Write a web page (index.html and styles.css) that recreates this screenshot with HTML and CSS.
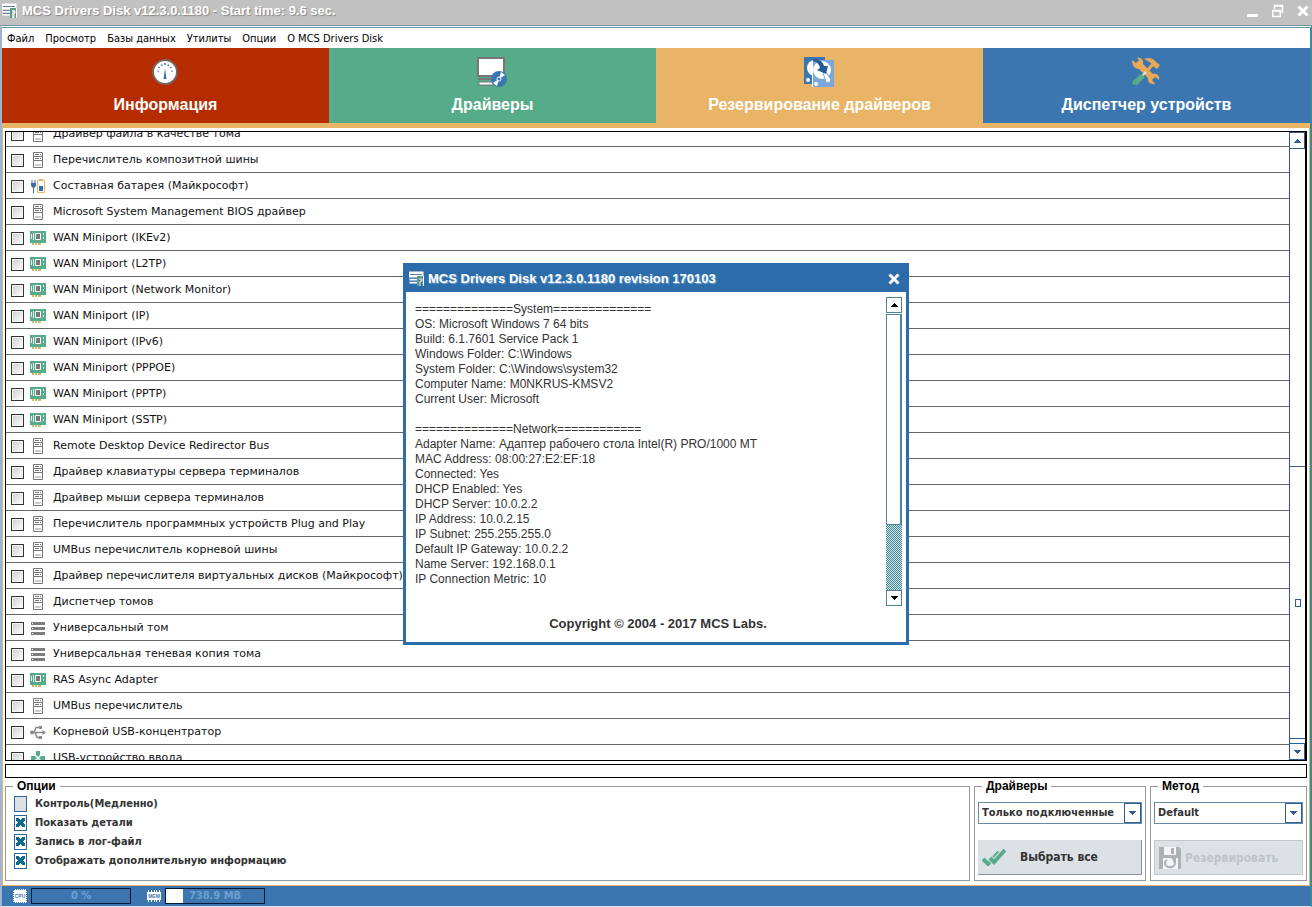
FILE: index.html
```html
<!DOCTYPE html>
<html lang="ru">
<head>
    <meta charset="UTF-8">
    <title>MCS Drivers Disk</title>
    <link rel="stylesheet" href="styles.css">
</head>
<body>

<!-- icons used more than once -->
<svg class="sprite" aria-hidden="true">
    <symbol id="i-system" viewBox="0 0 16 16">
        <path d="M3.5 .5h9v15h-9z" fill="#fff" stroke="#777"/>
        <path d="M3 4.500h10M3 8.500h10M5 2.500h4M10 2.500h1M5 6.500h4M10 6.500h1" stroke="#777" fill="none"/>
        <path d="M5 13.500l1-1 1 1 1-1 1 1 1-1 1 1" stroke="#888" fill="none"/>
    </symbol>
    <symbol id="i-card" viewBox="0 0 16 16">
        <path d="M0 1h16v12H0z" fill="#56ab88"/>
        <path d="M2 13h9v2H2z" fill="#c9b96a"/>
        <path d="M4.500 13v2M7.500 13v2" stroke="#fff"/>
        <path d="M5.500 3.500h5v6h-5z" fill="#777" stroke="#fff"/>
        <path d="M1.500 4v5M3.500 3v7M13.500 3v2M13.500 7v2" stroke="#e4f4ec"/>
    </symbol>
    <symbol id="i-battery" viewBox="0 0 16 16">
        <path d="M1 5h5v3l-2 2v5H3v-5L1 8z" fill="#3a6ea8"/>
        <path d="M2 2v3M5 2v3" stroke="#3a6ea8"/>
        <path d="M7.500 2.500h7v12h-7z" fill="#fff" stroke="#e9b466"/>
        <path d="M9 1h4v1H9z" fill="#e9b466"/>
        <path d="M9 8h4v5H9z" fill="#3a6ea8"/>
    </symbol>
    <symbol id="i-volume" viewBox="0 0 16 16">
        <path d="M1 2h14v3H1zM1 7h14v3H1zM1 12h14v3H1z" fill="#7d7d7d"/>
        <path d="M2 3.500h1M2 8.500h1M2 13.500h1" stroke="#fff"/>
    </symbol>
    <symbol id="i-usb" viewBox="0 0 16 16">
        <path d="M1 8.500h13M4 8.500l2-5h4M5 8.500l2 5h3" fill="none" stroke="#8a8a8a" stroke-width="1.500"/>
        <circle cx="2" cy="8.500" r="2" fill="#8a8a8a"/>
        <path d="M12.500 6l3.500 2.500-3.500 2.500zM9 2h3v3H9zM9 12h3v3H9z" fill="#8a8a8a"/>
    </symbol>
    <symbol id="i-hid" viewBox="0 0 16 16">
        <path d="M6 1h4v4l-2 2-2-2zM1 6h4l2 2-2 2H1zM15 6h-4L9 8l2 2h4zM6 15h4v-4L8 9l-2 2z" fill="#56ab88"/>
    </symbol>
    <symbol id="i-app" viewBox="0 0 16 16">
        <path d="M.5 1.500h13v4H.5zM.5 8.500h8M.5 11.500h8" fill="#fff" stroke="#fff" stroke-width="2"/>
        <path d="M1 3.500h12M1 7.500h7M1 10.500h7" stroke="#5a83a8"/>
        <path d="M8 5h7v10h-2V7h-3v8H8z" fill="#5d9b87"/>
        <path d="M10 8h3v2h-2v5M14.500 5v10" fill="none" stroke="#fff"/>
    </symbol>
    <symbol id="i-close" viewBox="0 0 12 12">
        <path d="M1.500 1.500l9 9M10.500 1.500l-9 9" stroke="#fff" stroke-width="3"/>
    </symbol>
    <symbol id="i-up" viewBox="0 0 7 4"><path d="M3 0h1v1h1v1h1v1h1v1H0V3h1V2h1V1h1z" fill="currentColor"/></symbol>
    <symbol id="i-down" viewBox="0 0 7 4"><path d="M0 0h7v1H6v1H5v1H4v1H3V3H2V2H1V1H0z" fill="currentColor"/></symbol>
</svg>

<header class="titlebar">
    <svg class="icon16"><use href="#i-app"/></svg>
    <h1>MCS Drivers Disk v12.3.0.1180 - Start time: 9.6 sec.</h1>
    <div class="win-buttons">
        <button type="button" aria-label="Minimize"><svg width="12" height="14"><path d="M0 10h11v3H0z" fill="#fff"/></svg></button>
        <button type="button" aria-label="Restore"><svg width="12" height="14"><path d="M2.500 5V1.500h8V8H9M2 2h9" fill="none" stroke="#fff" stroke-width="1.500"/><path d="M.75 6.500h7.500v6H.75zM0 7h9" fill="none" stroke="#fff" stroke-width="1.500"/></svg></button>
        <button type="button" aria-label="Close"><svg width="12" height="12"><use href="#i-close"/></svg></button>
    </div>
</header>

<div class="window">
    <nav class="menu">
        <a href="#">Файл</a>
        <a href="#">Просмотр</a>
        <a href="#">Базы данных</a>
        <a href="#">Утилиты</a>
        <a href="#">Опции</a>
        <a href="#">О MCS Drivers Disk</a>
    </nav>

    <nav class="tabs">
        <button type="button" class="tab info">
            <svg width="30" height="30" viewBox="0 0 30 30">
                <circle cx="15" cy="15" r="12" fill="#fff" stroke="#75655e" stroke-width="2"/>
                <path d="M7.500 14l1 .5M8.500 10l1 1M11.500 7.500l.5 1.500M15 6v2M18.500 7.500l-.5 1.500M21.500 10l-1 1M22.500 14l-1 .5" stroke="#3c76b1" stroke-width="1.500"/>
                <path d="M15 11l1.500 11h-3z" fill="#3c76b1"/>
            </svg>
            Информация
        </button>
        <button type="button" class="tab drivers">
            <svg width="30" height="30" viewBox="0 0 30 30">
                <path d="M1 1h26v18H1z" fill="#fff" stroke="#777" stroke-width="2"/>
                <path d="M1 22h14" stroke="#777" stroke-width="2"/>
                <path d="M2 25h14v3H2z" fill="#fff" stroke="#777"/>
                <circle cx="22" cy="22" r="8" fill="#3c76b1"/>
                <path d="M22 22l2-7 4 3zM22 22l-2 7-4-3z" fill="#fff"/>
                <circle cx="22" cy="22" r="2" fill="#3c76b1" stroke="#fff"/>
            </svg>
            Драйверы
        </button>
        <button type="button" class="tab backup">
            <svg width="30" height="30" viewBox="0 0 30 30">
                <path d="M0 0h21v27H0z" fill="#3c76b1"/>
                <circle cx="11" cy="11" r="8" fill="#fff"/>
                <circle cx="4" cy="23" r="2" fill="#fff"/>
                <path d="M9 3h21v27H9z" fill="#7aa8dc"/>
                <path d="M8.500 8v22" stroke="#fff"/>
                <circle cx="18" cy="13" r="9" fill="#fff"/>
                <circle cx="12" cy="27" r="2" fill="#fff"/>
                <path d="M19 16l3-1 5 8-2 3-3-1z" fill="#fff" stroke="#7aa8dc"/>
                <path d="M9 2c7 0 10 3 11 7h4l-2 8-9-4 3-2c-1-4-3-6-7-7z" fill="#275d96"/>
            </svg>
            Резервирование драйверов
        </button>
        <button type="button" class="tab devices">
            <svg width="30" height="30" viewBox="0 0 30 30">
                <path d="M16 14l6-7" stroke="#e9a955" stroke-width="3"/>
                <path d="M13 2c5-2 9-1 12 3l4 3-3 4-4-3-1-2-4-3z" fill="#e9a955"/>
                <path d="M1 3l4 3 3-3-2-2c4-1 7 2 6 6l10 10c4-1 7 2 6 6l-4-3-3 3 3 4c-4 1-8-2-7-6L8 12C4 12 1 9 1 3z" fill="#e9a955"/>
                <path d="M10 17l4 3-8 8-5-1 1-3z" fill="#56ab88"/>
                <path d="M14 14l2 2-4 3-1-1z" fill="#d8e0d8"/>
            </svg>
            Диспетчер устройств
        </button>
    </nav>

    <main>
        <div class="list-box">
            <ul class="list">
                <li><label><input type="checkbox"><svg class="icon16"><use href="#i-system"/></svg>Драйвер файла в качестве тома</label></li>
                <li><label><input type="checkbox"><svg class="icon16"><use href="#i-system"/></svg>Перечислитель композитной шины</label></li>
                <li><label><input type="checkbox"><svg class="icon16"><use href="#i-battery"/></svg>Составная батарея (Майкрософт)</label></li>
                <li><label><input type="checkbox"><svg class="icon16"><use href="#i-system"/></svg>Microsoft System Management BIOS драйвер</label></li>
                <li><label><input type="checkbox"><svg class="icon16"><use href="#i-card"/></svg>WAN Miniport (IKEv2)</label></li>
                <li><label><input type="checkbox"><svg class="icon16"><use href="#i-card"/></svg>WAN Miniport (L2TP)</label></li>
                <li><label><input type="checkbox"><svg class="icon16"><use href="#i-card"/></svg>WAN Miniport (Network Monitor)</label></li>
                <li><label><input type="checkbox"><svg class="icon16"><use href="#i-card"/></svg>WAN Miniport (IP)</label></li>
                <li><label><input type="checkbox"><svg class="icon16"><use href="#i-card"/></svg>WAN Miniport (IPv6)</label></li>
                <li><label><input type="checkbox"><svg class="icon16"><use href="#i-card"/></svg>WAN Miniport (PPPOE)</label></li>
                <li><label><input type="checkbox"><svg class="icon16"><use href="#i-card"/></svg>WAN Miniport (PPTP)</label></li>
                <li><label><input type="checkbox"><svg class="icon16"><use href="#i-card"/></svg>WAN Miniport (SSTP)</label></li>
                <li><label><input type="checkbox"><svg class="icon16"><use href="#i-system"/></svg>Remote Desktop Device Redirector Bus</label></li>
                <li><label><input type="checkbox"><svg class="icon16"><use href="#i-system"/></svg>Драйвер клавиатуры сервера терминалов</label></li>
                <li><label><input type="checkbox"><svg class="icon16"><use href="#i-system"/></svg>Драйвер мыши сервера терминалов</label></li>
                <li><label><input type="checkbox"><svg class="icon16"><use href="#i-system"/></svg>Перечислитель программных устройств Plug and Play</label></li>
                <li><label><input type="checkbox"><svg class="icon16"><use href="#i-system"/></svg>UMBus перечислитель корневой шины</label></li>
                <li><label><input type="checkbox"><svg class="icon16"><use href="#i-system"/></svg>Драйвер перечислителя виртуальных дисков (Майкрософт)</label></li>
                <li><label><input type="checkbox"><svg class="icon16"><use href="#i-system"/></svg>Диспетчер томов</label></li>
                <li><label><input type="checkbox"><svg class="icon16"><use href="#i-volume"/></svg>Универсальный том</label></li>
                <li><label><input type="checkbox"><svg class="icon16"><use href="#i-volume"/></svg>Универсальная теневая копия тома</label></li>
                <li><label><input type="checkbox"><svg class="icon16"><use href="#i-card"/></svg>RAS Async Adapter</label></li>
                <li><label><input type="checkbox"><svg class="icon16"><use href="#i-system"/></svg>UMBus перечислитель</label></li>
                <li><label><input type="checkbox"><svg class="icon16"><use href="#i-usb"/></svg>Корневой USB-концентратор</label></li>
                <li><label><input type="checkbox"><svg class="icon16"><use href="#i-hid"/></svg>USB-устройство ввода</label></li>
            </ul>
            <div class="scrollbar">
                <button type="button" aria-label="Up"><svg width="7" height="4"><use href="#i-up"/></svg></button>
                <div class="track"></div>
                <div class="thumb"><span></span></div>
                <button type="button" aria-label="Down"><svg width="7" height="4"><use href="#i-down"/></svg></button>
            </div>
        </div>

        <div class="progress-line"></div>

        <form class="panels">
            <fieldset class="options">
                <legend>Опции</legend>
                <label><input type="checkbox">Контроль(Медленно)</label>
                <label><input type="checkbox" checked>Показать детали</label>
                <label><input type="checkbox" checked>Запись в лог-файл</label>
                <label><input type="checkbox" checked>Отображать дополнительную информацию</label>
            </fieldset>
            <fieldset class="filter">
                <legend>Драйверы</legend>
                <div class="combo">
                    <select aria-label="Драйверы"><option>Только подключенные</option><option>Все</option></select>
                    <span><svg width="7" height="4"><use href="#i-down"/></svg></span>
                </div>
                <button type="button">
                    <svg width="24" height="18" viewBox="0 0 24 18">
                        <path d="M1 11l5 5L17 4" fill="none" stroke="#56ab88" stroke-width="4"/>
                        <path d="M8 10l4 4L23 2" fill="none" stroke="#dce1e6" stroke-width="6"/>
                        <path d="M8 10l4 4L23 2" fill="none" stroke="#56ab88" stroke-width="4"/>
                    </svg>
                    <span>Выбрать все</span>
                </button>
            </fieldset>
            <fieldset class="method">
                <legend>Метод</legend>
                <div class="combo">
                    <select aria-label="Метод"><option>Default</option></select>
                    <span><svg width="7" height="4"><use href="#i-down"/></svg></span>
                </div>
                <button type="button" disabled>
                    <svg width="22" height="22" viewBox="0 0 22 22">
                        <path d="M0 0h20l2 2v20H0z" fill="#aeb1b4"/>
                        <path d="M5 0h12v8H5zM4 11h15v11H4z" fill="#f4f5f6"/>
                        <path d="M12 1h3v6h-3z" fill="#aeb1b4"/>
                        <path d="M8 13a5 4 0 1 0 6 0" fill="none" stroke="#aeb1b4" stroke-width="2"/>
                        <path d="M11 10h6v6z" fill="#aeb1b4"/>
                    </svg>
                    <span>Резервировать</span>
                </button>
            </fieldset>
        </form>
    </main>

    <footer class="status">
        <svg width="14" height="14" viewBox="0 0 14 14">
            <path d="M1 1h12v12H1z" fill="#fff"/>
            <path d="M2 .5h11M2 13.500h11M.5 2v11M13.500 2v11" stroke="#fff" stroke-dasharray="1 1"/>
            <text x="7" y="9" class="chip">CPU</text>
        </svg>
        <div class="meter">0 %</div>
        <svg class="mem" width="14" height="14" viewBox="0 0 14 14">
            <path d="M0 3h14v8H0z" fill="#fff"/>
            <path d="M1.500 1v12M4.500 1v12M7.500 1v12M9.500 1v12M12.500 1v12" stroke="#fff"/>
            <text x="7" y="9" class="chip">MEM</text>
        </svg>
        <div class="meter memory"><span class="fill" style="width: 17%"></span>738.9 MB</div>
    </footer>
</div>

<section class="dialog" role="dialog" aria-labelledby="aboutTitle">
    <header>
        <svg class="icon16"><use href="#i-app"/></svg>
        <h2 id="aboutTitle">MCS Drivers Disk v12.3.0.1180 revision 170103</h2>
        <button type="button" aria-label="Close"><svg width="12" height="12"><use href="#i-close"/></svg></button>
    </header>
    <div class="report">
<pre>==============System==============
OS: Microsoft Windows 7 64 bits
Build: 6.1.7601 Service Pack 1
Windows Folder: C:\Windows
System Folder: C:\Windows\system32
Computer Name: M0NKRUS-KMSV2
Current User: Microsoft

==============Network============
Adapter Name: Адаптер рабочего стола Intel(R) PRO/1000 MT
MAC Address: 08:00:27:E2:EF:18
Connected: Yes
DHCP Enabled: Yes
DHCP Server: 10.0.2.2
IP Address: 10.0.2.15
IP Subnet: 255.255.255.0
Default IP Gateway: 10.0.2.2
Name Server: 192.168.0.1
IP Connection Metric: 10</pre>
        <div class="report-scroll">
            <button type="button" aria-label="Up"><svg width="7" height="4"><use href="#i-up"/></svg></button>
            <div class="thumb"></div>
            <div class="track"></div>
            <button type="button" aria-label="Down"><svg width="7" height="4"><use href="#i-down"/></svg></button>
        </div>
    </div>
    <p>Copyright © 2004 - 2017 MCS Labs.</p>
</section>

</body>
</html>
```
FILE: styles.css
```css
* {
    box-sizing: border-box;
}
body {
    margin: 0;
    height: 100vh;
    display: flex;
    flex-direction: column;
    font-family: "DejaVu Sans", Verdana, sans-serif;
    font-size: 11px;
    color: #111;
    background-color: #c1c1c1;
}
button, select, input {
    margin: 0;
    padding: 0;
    font: inherit;
    color: inherit;
}
button {
    border: none;
    background: none;
}
svg {
    flex: none;
    display: block;
}
.sprite {
    position: absolute;
    width: 0;
    height: 0;
}
.icon16 {
    width: 16px;
    height: 16px;
}

/* title bar */
.titlebar {
    height: 25px;
    padding: 0 3px 3px 2px;
    display: flex;
    align-items: center;
    gap: 4px;
    color: #fff;
}
.titlebar h1 {
    flex: 1;
    margin: 0;
    font: bold 13px/22px "Liberation Sans", Arial, sans-serif;
    text-shadow: 1px 1px 1px #888;
}
.win-buttons {
    display: flex;
    align-items: center;
    gap: 13px;
}

.window {
    flex: 1;
    min-height: 0;
    display: flex;
    flex-direction: column;
    background-color: #fff;
    border: 2px solid #9fb4d0;
    border-top: 3px double #7794a5;
    border-right-color: #3a8a9c;
    border-bottom: 1px solid #dfe6ee;
}

/* menu and tabs */
.menu {
    height: 20px;
    padding: 0 5px;
    display: flex;
    align-items: center;
    gap: 11px;
    font-family: "DejaVu Sans Condensed", Tahoma, sans-serif;
}
.menu a {
    color: #000;
    text-decoration: none;
}
.tabs {
    display: flex;
    background-color: #e9b466;
    padding-bottom: 5px;
}
.tab {
    flex: 1;
    height: 75px;
    padding: 9px 0 8px;
    display: flex;
    flex-direction: column;
    align-items: center;
    gap: 8px;
    color: #fff;
    font: bold 16px/20px "Liberation Sans", Arial, sans-serif;
}
.tab svg {
    margin-right: 2px;
}
.info { background-color: #b52c00; }
.drivers { background-color: #56ab88; }
.backup { background-color: #e9b466; }
.devices { background-color: #3c76b1; }

main {
    flex: 1;
    min-height: 0;
    display: flex;
    flex-direction: column;
    padding: 3px 2px 4px;
    border: 1px solid #e9b466;
    border-top: none;
}

/* driver list */
.list-box {
    flex: 1;
    min-height: 0;
    display: flex;
    overflow: hidden;
    border: 1px solid #000;
    border-right-width: 2px;
}
.list {
    flex: 1;
    /* scrolled part way into the first row */
    margin: -11px 0 0;
    padding: 0;
    list-style: none;
}
.list li {
    height: 26px;
    border-bottom: 1px solid #666;
}
.list label {
    display: flex;
    align-items: center;
    height: 24px;
    padding-left: 5px;
}
.list input {
    appearance: none;
    width: 13px;
    height: 13px;
    margin: 3px 6px 0 0;
    border: 1px solid #333;
    background: linear-gradient(135deg, #ccc, #fff);
    box-shadow: inset 0 0 0 1px #f4f4f4;
}
.list svg {
    margin: 2px 7px 0 0;
}
.scrollbar {
    width: 16px;
    display: flex;
    flex-direction: column;
    border-left: 1px solid #2f5688;
    color: #2f5d94;
}
.scrollbar button {
    height: 17px;
    display: flex;
    align-items: center;
    justify-content: center;
    border: 1px solid #2f5d94;
    border-left: none;
}
.scrollbar .track {
    flex: 318;
}
.scrollbar .thumb {
    flex: 271;
    margin-bottom: 4px;
    display: flex;
    align-items: center;
    justify-content: center;
    border: solid #2f5d94;
    border-width: 1px 0;
}
.scrollbar .thumb span {
    width: 6px;
    height: 8px;
    border: 1px solid #2f5d94;
}

.progress-line {
    height: 14px;
    margin-top: 3px;
    border: 1px solid #000;
}

/* bottom panels */
.panels {
    display: flex;
    gap: 4px;
    height: 103px;
    font: bold 11px/16px "DejaVu Sans Condensed", Tahoma, sans-serif;
    color: #333;
}
fieldset {
    min-width: 0;
    margin: 0;
    padding: 0 3px 4px;
    border: 1px solid #999;
}
legend {
    margin-left: 4px;
    padding: 0 4px;
    font: bold 12px/16px "Liberation Sans", Arial, sans-serif;
    color: #000;
}
.options {
    flex: 1;
    padding-left: 8px;
}
.options legend {
    margin-left: -1px;
}
.options label {
    display: flex;
    align-items: center;
    height: 19px;
}
.options input {
    appearance: none;
    width: 13px;
    height: 16px;
    margin-right: 8px;
    border: 1px solid #2f6594;
    background-color: #dce1e6;
}
.options input:checked {
    background:
        linear-gradient(45deg, transparent 38%, #0f6a8c 38% 62%, transparent 62%) center / 9px 9px no-repeat,
        linear-gradient(-45deg, transparent 38%, #0f6a8c 38% 62%, transparent 62%) center / 9px 9px no-repeat,
        #fff;
}
.filter { width: 172px; }
.method { width: 157px; }
.combo {
    display: flex;
    height: 22px;
    margin: 8px 0 16px;
    border: 1px solid #6688ab;
}
.combo select {
    flex: 1;
    min-width: 0;
    appearance: none;
    padding-left: 3px;
    border: none;
    background-color: #fff;
}
.combo span {
    width: 17px;
    display: flex;
    align-items: center;
    justify-content: center;
    border: 1px solid #2f5d94;
    color: #2f5d94;
}
fieldset button {
    width: 100%;
    height: 35px;
    display: flex;
    align-items: center;
    padding: 0 4px;
    background-color: #dce1e6;
    border: solid #8a939c;
    border-width: 0 1px 1px 0;
    font-size: 12px;
}
.filter button {
    gap: 14px;
}
.method button {
    gap: 4px;
    border: 1px solid #c3c8cc;
    color: #bfc4c9;
}

/* status bar */
.status {
    height: 20px;
    padding: 0 11px;
    display: flex;
    align-items: center;
    background-color: #3c76b1;
}
.mem {
    margin-left: 16px;
}
.chip {
    font: bold 5px "Liberation Sans", Arial, sans-serif;
    text-anchor: middle;
    fill: #3c76b1;
}
.meter {
    position: relative;
    width: 100px;
    height: 16px;
    margin-left: 4px;
    border: 1px solid #001a33;
    font: bold 11px/14px "DejaVu Sans Condensed", Tahoma, sans-serif;
    text-align: center;
    color: #6f9fd0;
}
.fill {
    position: absolute;
    top: 0;
    bottom: 0;
    left: 0;
    background-color: #fff;
}

/* about dialog */
.dialog {
    position: absolute;
    top: 50%;
    left: 50%;
    transform: translate(-50%, -50%);
    width: 506px;
    height: 382px;
    display: flex;
    flex-direction: column;
    background-color: #fff;
    border: 3px solid #2c6cab;
    border-top: none;
    color: #333;
    font-family: "Liberation Sans", Arial, sans-serif;
}
.dialog header {
    height: 29px;
    padding: 4px 6px 0 3px;
    display: flex;
    align-items: center;
    gap: 3px;
    background-color: #2c6cab;
    color: #fff;
}
.dialog h2 {
    flex: 1;
    margin: 0;
    font: bold 13px/20px "Liberation Sans", Arial, sans-serif;
    text-shadow: 1px 1px 1px #7ba3cd;
}
.report {
    flex: 1;
    min-height: 0;
    display: flex;
    padding: 5px 4px 0 9px;
}
.report pre {
    flex: 1;
    margin: 5px 0 0;
    font: 12px/15px "Liberation Sans", Arial, sans-serif;
}
.report-scroll {
    width: 16px;
    display: flex;
    flex-direction: column;
    color: #000;
}
.report-scroll button {
    height: 16px;
    display: flex;
    align-items: center;
    justify-content: center;
    border: 1px solid #4e83a0;
}
.report-scroll .thumb {
    flex: 212;
    margin-top: 1px;
    border: 1px solid #4e83a0;
    border-right-width: 2px;
}
.report-scroll .track {
    flex: 65;
    background: repeating-conic-gradient(#3f8593 0 25%, #d5e6ea 0 50%) 0 0 / 2px 2px;
}
.dialog p {
    margin: 10px 0 10px 4px;
    font: bold 13px/16px "Liberation Sans", Arial, sans-serif;
    text-align: center;
}
```
